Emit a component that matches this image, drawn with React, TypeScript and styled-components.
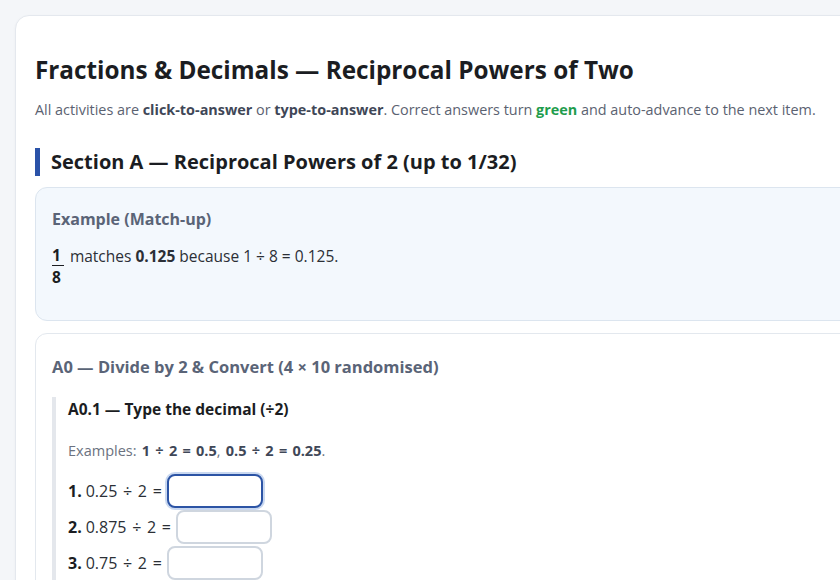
import React from "react";
import styled, { createGlobalStyle } from "styled-components";

const Global = createGlobalStyle`
  html, body { margin: 0; padding: 0; background: #f4f6f9; overflow: hidden; }
  body { font-family: "Open Sans", "Noto Sans", sans-serif; color: #1f2328; }
  * { box-sizing: border-box; }
`;

const Page = styled.div`
  padding: 15px 0 0 15px;
  width: 1100px;
`;

const Card = styled.main`
  background: #ffffff;
  border: 1px solid #e4e8ee;
  border-radius: 14px;
  padding: 38px 20px 20px 19px;
  width: 1000px;
  box-shadow: 0 1px 3px rgba(15, 23, 42, 0.04);
`;

const Title = styled.h1`
  margin: 0;
  font-size: 24.3px;
  line-height: 32px;
  font-weight: 700;
  color: #1b1d22;
`;

const Lead = styled.p`
  margin: 14px 0 0;
  font-size: 14.4px;
  line-height: 20px;
  color: #5b6271;
`;

const Strong = styled.b<{ $tone?: "green" }>`
  font-weight: 700;
  color: ${(p) => (p.$tone === "green" ? "#1f9d4d" : "#3f4757")};
`;

const SectionHeading = styled.h2`
  margin: 28px 0 0;
  padding-left: 11px;
  border-left: 5px solid #2a52a8;
  font-size: 20px;
  line-height: 28px;
  font-weight: 700;
  color: #1b1d22;
`;

const ExampleBox = styled.section`
  margin-top: 11px;
  background: #f3f8fd;
  border: 1px solid #dce5ef;
  border-radius: 12px;
  padding: 20px 16px 32px;
`;

const BoxTitle = styled.h3<{ $size?: number }>`
  margin: 0;
  font-size: ${(p) => p.$size ?? 16}px;
  line-height: 22px;
  font-weight: 700;
  color: #5a6477;
`;

const ExampleLine = styled.p`
  margin: 16px 0 0;
  display: flex;
  align-items: flex-start;
  gap: 6px;
  font-size: 15.5px;
  line-height: 21px;
  color: #2b2f36;
`;

const Fraction = styled.span`
  display: inline-flex;
  flex-direction: column;
  align-items: flex-start;
  font-weight: 700;
  color: #1b1d22;
`;

const Numerator = styled.span`
  border-bottom: 1.5px solid #1b1d22;
  padding-right: 3px;
  line-height: 19px;
`;

const Denominator = styled.span`
  line-height: 22px;
`;

const ActivityCard = styled.section`
  margin-top: 12px;
  background: #ffffff;
  border: 1px solid #e3e8ee;
  border-radius: 12px;
  padding: 22px 16px 24px;
`;

const Sub = styled.div`
  margin-top: 19px;
  border-left: 4px solid #e4e7ec;
  padding: 2px 0 0 12px;
`;

const SubTitle = styled.h4`
  margin: 0;
  font-size: 15.5px;
  line-height: 20px;
  font-weight: 700;
  color: #1b1d22;
`;

const Examples = styled.p`
  margin: 22px 0 0;
  font-size: 14.5px;
  line-height: 20px;
  word-spacing: 1.5px;
  color: #6b7280;
`;

const Rows = styled.div`
  margin-top: 13px;
  display: flex;
  flex-direction: column;
  gap: 2px;
`;

const Row = styled.label`
  display: flex;
  align-items: center;
  gap: 5px;
  font-size: 16px;
  word-spacing: 1.5px;
  color: #2b2f36;
`;

const Num = styled.b`
  font-weight: 700;
  color: #1b1d22;
  margin-right: 4px;
`;

const Answer = styled.input<{ $active?: boolean }>`
  width: 96px;
  height: 34px;
  border-radius: 8px;
  border: 2px solid ${(p) => (p.$active ? "#2c54a5" : "#cfd6df")};
  box-shadow: ${(p) => (p.$active ? "0 0 0 2px #c9d8f0" : "none")};
  background: #fff;
  text-align: center;
  font-family: inherit;
  font-size: 16px;
  outline: none;
  caret-color: #111;
`;

const items = [
  { n: 1, q: "0.25 ÷ 2 =" },
  { n: 2, q: "0.875 ÷ 2 =" },
  { n: 3, q: "0.75 ÷ 2 =" },
];

export default function App() {
  return (
    <>
      <Global />
      <Page>
        <Card>
          <Title>Fractions &amp; Decimals — Reciprocal Powers of Two</Title>
          <Lead>
            All activities are <Strong>click-to-answer</Strong> or <Strong>type-to-answer</Strong>. Correct answers turn{" "}
            <Strong $tone="green">green</Strong> and auto-advance to the next item.
          </Lead>
          <SectionHeading>Section A — Reciprocal Powers of 2 (up to 1/32)</SectionHeading>
          <ExampleBox>
            <BoxTitle>Example (Match-up)</BoxTitle>
            <ExampleLine>
              <Fraction>
                <Numerator>1</Numerator>
                <Denominator>8</Denominator>
              </Fraction>
              <span>
                matches <b>0.125</b> because 1 ÷ 8 = 0.125.
              </span>
            </ExampleLine>
          </ExampleBox>
          <ActivityCard>
            <BoxTitle $size={16.5}>A0 — Divide by 2 &amp; Convert (4 × 10 randomised)</BoxTitle>
            <Sub>
              <SubTitle>A0.1 — Type the decimal (÷2)</SubTitle>
              <Examples>
                Examples: <Strong>1 ÷ 2 = 0.5</Strong>, <Strong>0.5 ÷ 2 = 0.25</Strong>.
              </Examples>
              <Rows>
                {items.map((it, i) => (
                  <Row key={it.n}>
                    <span>
                      <Num>{it.n}.</Num>
                      {it.q}
                    </span>
                    <Answer $active={i === 0} autoFocus={i === 0} />
                  </Row>
                ))}
              </Rows>
            </Sub>
          </ActivityCard>
        </Card>
      </Page>
    </>
  );
}
